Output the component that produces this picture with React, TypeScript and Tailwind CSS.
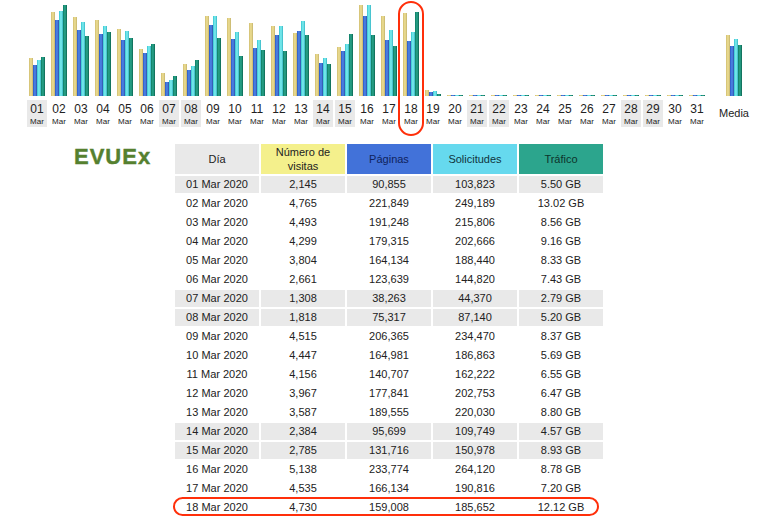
const days: [string, number[], boolean][] = [
  ["01", [38, 31, 36, 39], true],
  ["02", [84, 76, 85, 91], false],
  ["03", [79, 66, 74, 60], false],
  ["04", [76, 62, 70, 64], false],
  ["05", [67, 56, 65, 58], false],
  ["06", [47, 43, 50, 52], false],
  ["07", [23, 14, 16, 20], true],
  ["08", [32, 26, 30, 36], true],
  ["09", [80, 71, 80, 58], false],
  ["10", [78, 57, 64, 40], false],
  ["11", [73, 48, 56, 46], false],
  ["12", [70, 61, 70, 45], false],
  ["13", [63, 65, 75, 61], false],
  ["14", [42, 33, 38, 32], true],
  ["15", [49, 45, 52, 62], true],
  ["16", [91, 80, 91, 61], false],
  ["17", [80, 56, 66, 50], false],
  ["18", [83, 55, 64, 84], false],
  ["19", [6, 4, 5, 2], false],
  ["20", [1, 1, 1, 1], false],
  ["21", [1, 1, 1, 1], true],
  ["22", [1, 1, 1, 1], true],
  ["23", [1, 1, 1, 1], false],
  ["24", [1, 1, 1, 1], false],
  ["25", [1, 1, 1, 1], false],
  ["26", [1, 1, 1, 1], false],
  ["27", [1, 1, 1, 1], false],
  ["28", [1, 1, 1, 1], true],
  ["29", [1, 1, 1, 1], true],
  ["30", [1, 1, 1, 1], false],
  ["31", [1, 1, 1, 1], false],
];

const rows: [string, string, string, string, string, boolean][] = [
  ["01 Mar 2020", "2,145", "90,855", "103,823", "5.50 GB", true],
  ["02 Mar 2020", "4,765", "221,849", "249,189", "13.02 GB", false],
  ["03 Mar 2020", "4,493", "191,248", "215,806", "8.56 GB", false],
  ["04 Mar 2020", "4,299", "179,315", "202,666", "9.16 GB", false],
  ["05 Mar 2020", "3,804", "164,134", "188,440", "8.33 GB", false],
  ["06 Mar 2020", "2,661", "123,639", "144,820", "7.43 GB", false],
  ["07 Mar 2020", "1,308", "38,263", "44,370", "2.79 GB", true],
  ["08 Mar 2020", "1,818", "75,317", "87,140", "5.20 GB", true],
  ["09 Mar 2020", "4,515", "206,365", "234,470", "8.37 GB", false],
  ["10 Mar 2020", "4,447", "164,981", "186,863", "5.69 GB", false],
  ["11 Mar 2020", "4,156", "140,707", "162,222", "6.55 GB", false],
  ["12 Mar 2020", "3,967", "177,841", "202,753", "6.47 GB", false],
  ["13 Mar 2020", "3,587", "189,555", "220,030", "8.80 GB", false],
  ["14 Mar 2020", "2,384", "95,699", "109,749", "4.57 GB", true],
  ["15 Mar 2020", "2,785", "131,716", "150,978", "8.93 GB", true],
  ["16 Mar 2020", "5,138", "233,774", "264,120", "8.78 GB", false],
  ["17 Mar 2020", "4,535", "166,134", "190,816", "7.20 GB", false],
  ["18 Mar 2020", "4,730", "159,008", "185,652", "12.12 GB", false],
];

function Bars({ h }: { h: number[] }) {
  return (
    <div className="flex items-end h-[96px] w-[16px]">
      <div className="w-[4px] bg-gradient-to-r from-[#d0bd70] via-[#efe094] to-[#c4b36c]" style={{ height: h[0] }} />
      <div className="w-[4px] bg-gradient-to-r from-[#2e57c4] via-[#4f88ea] to-[#2e4fa8]" style={{ height: h[1] }} />
      <div className="w-[4px] bg-gradient-to-r from-[#2fc4d0] via-[#7ff0f2] to-[#33b6c4]" style={{ height: h[2] }} />
      <div className="w-[4px] bg-gradient-to-r from-[#0c7a62] via-[#2aa88e] to-[#0a6450]" style={{ height: h[3] }} />
    </div>
  );
}

const th = "h-[30px] w-[84px] p-0 font-normal text-center align-middle leading-[14px]";

export default function App() {
  return (
    <div className="relative w-[766px] h-[520px] overflow-hidden bg-white text-[#222] font-['Liberation_Sans',Arial,sans-serif]">
      <div className="flex pl-[27px] gap-[2px]">
        {days.map(([d, h, we]) => (
          <div key={d} className="w-[20px] flex flex-col items-center">
            <Bars h={h} />
            <div className={`mt-[4px] w-[20px] h-[27px] flex flex-col items-center ${we ? "bg-[#e9e9e9]" : ""}`}>
              <span className="text-[12px] leading-[14px] mt-[2px]">{d}</span>
              <span className="text-[8px] leading-[9px] mt-[1px]">Mar</span>
            </div>
          </div>
        ))}
        <div className="ml-[9px] w-[32px] flex flex-col items-center">
          <Bars h={[61, 50, 57, 51]} />
          <span className="mt-[11px] text-[11px] leading-[13px]">Media</span>
        </div>
      </div>

      <div className="flex mt-[15px] pl-[74px]">
        <div className="w-[99px] pt-[2px] text-[22px] leading-[26px] font-bold tracking-[1px] text-[#55802f] [-webkit-text-stroke:0.4px_#55802f]">
          EVUEx
        </div>
        <table className="border-separate border-spacing-[2px] text-[11px] table-fixed w-[432px]">
          <thead>
            <tr>
              <th className={`${th} bg-[#e9e9e9]`}>Día</th>
              <th className={`${th} bg-[#f4f08c]`}>Número de<br />visitas</th>
              <th className={`${th} bg-[#4272d9] text-[#10235c]`}>Páginas</th>
              <th className={`${th} bg-[#66d9ee] text-[#10353d]`}>Solicitudes</th>
              <th className={`${th} bg-[#2ca58d] text-[#0c332b]`}>Tráfico</th>
            </tr>
          </thead>
          <tbody>
            {rows.map(([a, b, c, d, e, we]) => (
              <tr key={a}>
                {[a, b, c, d, e].map((v, i) => (
                  <td key={i} className={`h-[17px] p-0 text-center leading-[13px] ${we ? "bg-[#e9e9e9]" : ""}`}>{v}</td>
                ))}
              </tr>
            ))}
          </tbody>
        </table>
      </div>

      <div className="absolute left-[398px] top-[1px] w-[26px] h-[135px] rounded-[13px] border-2 border-[#ff2f0a]" />
      <div className="absolute left-[173px] top-[497px] w-[426px] h-[19px] rounded-[10px] border-2 border-[#ff2f0a]" />
    </div>
  );
}
